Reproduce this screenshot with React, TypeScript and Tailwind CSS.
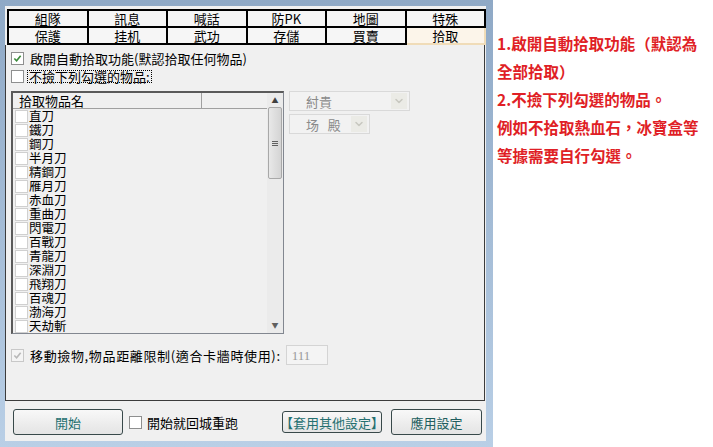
import { ChevronDown } from "lucide-react";

const tabs = ["組隊", "訊息", "喊話", "防PK", "地圖", "特殊", "保護", "挂机", "武功", "存儲", "買賣", "拾取"];

const items = [
  "直刀",
  "鐵刀",
  "鋼刀",
  "半月刀",
  "精鋼刀",
  "雁月刀",
  "赤血刀",
  "重曲刀",
  "閃電刀",
  "百戰刀",
  "青龍刀",
  "深淵刀",
  "飛翔刀",
  "百魂刀",
  "渤海刀",
  "天劫斬",
];

const notes = ["1.啟開自動拾取功能（默認為", "全部拾取）", "2.不撿下列勾選的物品。", "例如不拾取熱血石，冰寶盒等", "等據需要自行勾選。"];

function Box({ checked, disabled }: { checked?: boolean; disabled?: boolean }) {
  return (
    <span
      className={`flex h-[13px] w-[13px] shrink-0 items-center justify-center border ${
        disabled ? "border-[#c8c8c8] bg-[#f4f4f4]" : "border-[#8e8f8f] bg-white"
      }`}
    >
      {checked ? (
        <svg viewBox="0 0 10 10" className="h-[9px] w-[9px]">
          <path
            d="M1.5 5 L4 7.5 L8.5 2"
            fill="none"
            stroke={disabled ? "#b8b8b8" : "#3a8a3a"}
            strokeWidth="1.8"
          />
        </svg>
      ) : null}
    </span>
  );
}

function ListBox() {
  return <span className="h-[13px] w-[13px] shrink-0 border border-[#d0d0d0] bg-white" />;
}

function Select({ label, width }: { label: string; width: string }) {
  return (
    <div className={`flex h-[20px] ${width} items-center justify-between border border-[#d9d9d9] bg-[#f2f2f2] pl-[16px] pr-[2px] text-[13px] text-[#8a8a8a]`}>
      <span className="whitespace-pre">{label}</span>
      <span className="flex h-[16px] w-[16px] items-center justify-center bg-[#ebebe6]">
        <ChevronDown className="h-3 w-3 text-[#c8c8c0]" strokeWidth={3} />
      </span>
    </div>
  );
}

const buttonClass =
  "flex shrink-0 items-center justify-center whitespace-nowrap rounded-[3px] border border-[#38494a] bg-gradient-to-b from-[#f8f8f8] to-[#e4e4e4] text-[13px]";

export default function App() {
  return (
    <div
      className="flex h-[447px] w-[713px] bg-white text-[13px] leading-none text-black"
      style={{ fontFamily: '"Noto Sans CJK TC", "Noto Sans CJK SC", sans-serif' }}
    >
      <div className="flex h-full w-[493px] shrink-0 flex-col bg-gradient-to-b from-[#8fa9c6] to-[#b9cfe6] pb-[6px] pl-[5px] pr-[7px] pt-[6px]">
        <div className="flex flex-1 flex-col bg-[#f0f0f0]">
          <div className="ml-[2px] mt-[3px] grid w-[479px] grid-cols-6 border-l-2 border-t-2 border-black">
            {tabs.map((tab) => (
              <div
                key={tab}
                className={`flex h-[17px] items-center justify-center border-b-2 border-r-2 ${
                  tab === "拾取" ? "border-[#f0dcb8] bg-[#fcf5ea]" : "border-black bg-[#f6f6f6]"
                }`}
              >
                {tab}
              </div>
            ))}
          </div>

          <div className="flex h-[356px] w-[480px] flex-col border-b border-l border-r border-[#3c3c3c] pl-[5px]">
            <label className="mt-[7px] flex items-center gap-[6px]">
              <Box checked />
              <span className="whitespace-nowrap">啟開自動拾取功能(默認拾取任何物品)</span>
            </label>
            <label className="mt-[5px] flex items-center gap-[3px]">
              <Box />
              <span className="whitespace-nowrap border border-dotted border-black px-[1px] leading-[11px]">不撿下列勾選的物品:</span>
            </label>

            <div className="mt-[8px] flex items-start gap-[5px]">
              <div className="flex h-[243px] w-[273px] flex-col border border-l-2 border-t-2 border-[#828790] border-l-[#5a5a5a] border-t-[#5a5a5a] bg-[#f0f0f0]">
                <div className="flex min-h-0 flex-1">
                  <div className="flex min-w-0 flex-1 flex-col">
                    <div className="flex h-[16px] shrink-0 border-b border-[#a0a0a0]">
                      <div className="flex w-[189px] items-center border-r border-[#a0a0a0] pl-[6px]">拾取物品名</div>
                      <div className="flex-1" />
                    </div>
                    <div className="flex flex-col overflow-hidden pl-[2px]">
                      {items.map((item) => (
                        <div key={item} className="flex h-[14px] shrink-0 items-center gap-[1px]">
                          <ListBox />
                          <span className="text-[12.5px] leading-[14px]">{item}</span>
                        </div>
                      ))}
                    </div>
                  </div>
                  <div className="flex w-[16px] flex-col items-center bg-[#ebebeb]">
                    <span className="mt-[4px] text-[7px] text-[#404040]">▲</span>
                    <div className="mt-[3px] flex h-[72px] w-[14px] items-center justify-center rounded-[2px] border border-[#a8a8a8] bg-gradient-to-r from-[#e8e8e8] to-[#d4d4d4]">
                      <span className="flex flex-col gap-[1px]">
                        <span className="h-px w-[6px] bg-[#606060]" />
                        <span className="h-px w-[6px] bg-[#606060]" />
                        <span className="h-px w-[6px] bg-[#606060]" />
                      </span>
                    </div>
                    <span className="mb-[4px] mt-auto text-[7px] text-[#606060]">▼</span>
                  </div>
                </div>
              </div>

              <div className="flex flex-col gap-[3px]">
                <Select label="紂貴" width="w-[121px]" />
                <Select label="场   殿" width="w-[81px]" />
              </div>
            </div>

            <div className="mt-[11px] flex items-center">
              <Box checked disabled />
              <span className="ml-[6px] whitespace-nowrap tracking-[0.65px]">移動撿物,物品距離限制(適合卡牆時使用):</span>
              <span
                className="ml-[5px] flex h-[20px] w-[42px] items-center border border-[#d4d4d4] bg-[#f4f4f4] pl-[5px] text-[#9a9a9a]"
                style={{ fontFamily: '"Liberation Serif", serif' }}
              >
                111
              </span>
            </div>
          </div>

          <div className="flex items-center pl-[8px] pt-[8px]">
            <button className={`${buttonClass} h-[26px] w-[110px] text-[#247070]`}>開始</button>
            <label className="ml-[6px] flex shrink-0 items-center gap-[5px] whitespace-nowrap">
              <Box />
              <span>開始就回城重跑</span>
            </label>
            <button className={`${buttonClass} ml-[44px] h-[22px] w-[100px] text-[#247070]`}>【套用其他設定】</button>
            <button className={`${buttonClass} ml-[9px] h-[26px] w-[91px] text-[#205e5e]`}>應用設定</button>
          </div>
        </div>
      </div>

      <div className="flex flex-col gap-[12px] pl-[4px] pt-[35px] text-[15.5px] font-bold text-[#e01f26]">
        {notes.map((note) => (
          <p key={note} className="whitespace-nowrap leading-[16px]">
            {note}
          </p>
        ))}
      </div>
    </div>
  );
}
